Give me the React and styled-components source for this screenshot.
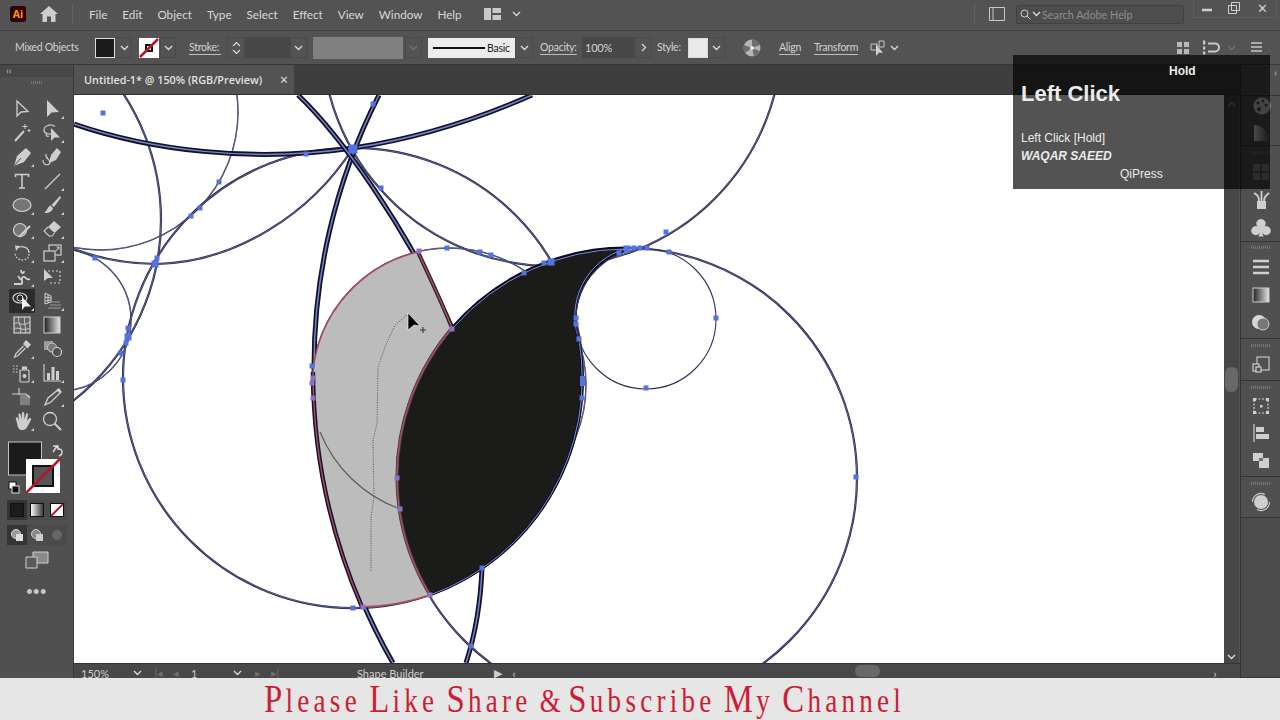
import React from "react";
import styled, { createGlobalStyle } from "styled-components";

const GlobalStyle = createGlobalStyle`
  html, body { margin: 0; padding: 0; background: #535353; overflow: hidden; }
  #root { width: 1280px; height: 720px; }
`;

const Screen = styled.div`
  position: relative; width: 1280px; height: 720px; overflow: hidden;
  display: flex; flex-direction: column;
  font-family: Lato, "Open Sans", sans-serif; color: #d6d6d6; background: #535353;
`;
/* ---------- menu bar ---------- */
const MenuBar = styled.header`
  height: 31px; flex: none; display: flex; align-items: center; padding: 0 0 2px 10px; box-sizing: border-box;
  background: #535353; border-bottom: 1px solid #424242;
`;
const AiLogo = styled.div`
  width: 16px; height: 16px; border-radius: 3px; background: #330000; color: #ff9a00;
  font: 700 10.5px/16px "Open Sans", sans-serif; text-align: center; flex: none;
`;
const HomeBtn = styled.svg`width: 18px; height: 16px; margin-left: 14px; flex: none;`;
const VRule = styled.div`
  width: 1px; height: 20px; background: #636363; margin-left: ${p => p.$ml || 0}px; flex: none;
`;
const MenuList = styled.nav`
  display: flex; gap: 15px; margin-left: 16px; width: 371px; font-size: 11.7px; color: #d8d8d8;
`;
const WorkspaceBtn = styled.div`
  display: flex; align-items: center; gap: 11px; margin-left: 24px;
`;
const Grow = styled.div`flex: 1;`;
const PanelBtn = styled.svg`width: 16px; height: 16px; margin-left: 14px; flex: none;`;
const SearchBox = styled.div`
  width: 168px; height: 19px; margin-left: 11px; display: flex; align-items: center; gap: 1px;
  padding-left: 3px; box-sizing: border-box; background: #4d4d4d; border: 1px solid #404040;
  border-radius: 2px; font-size: 10.8px; color: #8f8f8f;
`;
const WinButtons = styled.div`
  width: 84px; height: 18px; margin: 0 3px 11px 9px; display: flex; align-items: center;
  justify-content: space-around; border: 1px solid #5e5e5e; border-top: 0; box-sizing: border-box;
  font-size: 13px; color: #cfcfcf;
`;
/* ---------- options bar ---------- */
const OptionsBar = styled.div`
  height: 34px; flex: none; display: flex; align-items: center; box-sizing: border-box; padding-left: 15px;
  background: #535353; border-bottom: 1px solid #363636; font-size: 10.5px; letter-spacing: -0.25px; color: #d2d2d2;
`;
const OptLabel = styled.span`
  width: ${p => p.$w}px; flex: none; margin-left: ${p => p.$ml || 0}px; white-space: nowrap;
  border-bottom: ${p => (p.$link ? "1px solid #bdbdbd" : "0")}; line-height: 13px;
`;
const Swatch = styled.div`
  width: 20px; height: 20px; margin-left: ${p => p.$ml || 0}px; box-sizing: border-box; flex: none;
  background: ${p => p.$bg}; border: 1px solid #dcdcdc;
`;
const ChevBox = styled.div`
  width: ${p => p.$w || 17}px; height: 21px; margin-left: ${p => p.$ml || 0}px; flex: none;
  display: flex; align-items: center; justify-content: center; box-sizing: border-box;
  border: 1px solid ${p => (p.$bare ? "transparent" : "#4a4a4a")}; color: #d8d8d8;
`;
const Field = styled.div`
  width: ${p => p.$w}px; height: 21px; margin-left: ${p => p.$ml || 0}px; flex: none;
  background: #474747; display: flex; align-items: center; padding-left: 3px; box-sizing: border-box;
  font-size: 11px; color: #d6d6d6;
`;
const GrayBox = styled.div`
  width: 90px; height: 22px; margin-left: 6px; background: #808080; flex: none;
`;
const ProfileBox = styled.div`
  width: 87px; height: 20px; margin-left: 6px; background: #ececec; flex: none; color: #222;
  display: flex; align-items: center; gap: 2px; padding-left: 5px; box-sizing: border-box; font-size: 10.5px;
`;
const ProfileLine = styled.div`width: 52px; height: 2px; background: #111; flex: none;`;
const IconSlot = styled.svg`
  width: ${p => p.$s || 18}px; height: ${p => p.$s || 18}px; margin-left: ${p => p.$ml || 0}px; flex: none;
`;
const EndPad = styled.div`width: 17px; flex: none;`;
/* ---------- body ---------- */
const Body = styled.div`flex: 1; display: flex; min-height: 0;`;
const Tools = styled.aside`
  width: 74px; flex: none; box-sizing: border-box; background: #505050; border-right: 1px solid #3a3a3a;
  display: flex; flex-direction: column; align-items: center;
`;
const ToolsHead = styled.div`
  align-self: stretch; height: 12px; background: #474747; color: #c4c4c4; font-size: 10px; line-height: 10px;
  padding-left: 6px;
`;
const Grip = styled.div`
  width: ${p => p.$w || 12}px; height: 3px; margin-top: ${p => p.$mt || 0}px; flex: none;
  background: repeating-linear-gradient(90deg, #747474 0 1px, transparent 1px 2px);
`;
const ToolGrid = styled.div`
  display: grid; grid-template-columns: 26px 26px; grid-auto-rows: 24px; column-gap: 4px; margin-top: 13px;
`;
const ToolBtn = styled.div`
  position: relative; display: flex; align-items: center; justify-content: center; color: #cfcfcf;
  background: ${p => (p.$on ? "#2c2c2c" : "transparent")};
  &::after {
    content: ""; position: absolute; right: 1px; bottom: 2px; width: 0; height: 0;
    display: ${p => (p.$more ? "block" : "none")};
    border-left: 3px solid transparent; border-bottom: 3px solid #d0d0d0;
  }
`;
const ToolSvg = styled.svg`width: 20px; height: 20px; display: block;`;
const ColorWidget = styled.svg`width: 60px; height: 53px; margin-top: 8px; display: block; flex: none;`;
const MiniRow = styled.div`
  display: grid; grid-template-columns: repeat(3, 20px); margin-top: ${p => p.$mt}px; height: 20px;
  background: #4b4b4b;
`;
const MiniBtn = styled.div`
  display: flex; align-items: center; justify-content: center;
  background: ${p => (p.$on ? "#343434" : "transparent")};
`;
const MiniSvg = styled.svg`width: 16px; height: 16px; display: block;`;
const ScreenMode = styled.svg`width: 24px; height: 18px; margin-top: 6px; flex: none;`;
const Dots = styled.div`
  margin-top: 18px; color: #c8c8c8; font-size: 11px; line-height: 8px; font-weight: 700; letter-spacing: 0.5px;
`;
const Center = styled.main`flex: 1; display: flex; flex-direction: column; min-width: 0;`;
const TabBar = styled.div`
  height: 30px; flex: none; background: #3e3e3e; display: flex; box-sizing: border-box; border-bottom: 1px solid #2f2f2f;
`;
const Tab = styled.div`
  width: 220px; display: flex; align-items: center; justify-content: space-between; padding: 0 6px 0 10px;
  box-sizing: border-box; background: #535353; font-family: "Open Sans", sans-serif; font-size: 10.8px; font-weight: 600; color: #e2e2e2; white-space: nowrap;
`;
const TabClose = styled.span`font-size: 14px; color: #e8e8e8; font-weight: 400;`;
const Stage = styled.div`flex: 1; display: flex; min-height: 0;`;
const Artboard = styled.svg`width: 1150px; height: 568px; display: block; background: #fff; flex: none;`;
const VScroll = styled.div`
  width: 15px; flex: none; background: #474747; display: flex; flex-direction: column; align-items: center;
  justify-content: space-between; padding: 6px 0 3px; box-sizing: border-box; position: relative;
`;
const Thumb = styled.div`
  position: absolute; top: 272px; left: 1px; width: 13px; height: 25px; border-radius: 6px; background: #686868;
`;
const StatusBar = styled.div`
  height: 15px; flex: none; display: flex; align-items: flex-start; background: #484848; box-sizing: border-box;
  border-top: 1px solid #333; font-size: 11px; color: #cfcfcf; overflow: hidden;
`;
const StatusCell = styled.span`
  width: ${p => p.$w}px; margin-left: ${p => p.$ml || 0}px; flex: none; white-space: nowrap; display: flex;
  align-items: center; justify-content: ${p => p.$c ? "center" : "flex-start"}; height: 18px;
  color: ${p => (p.$dim ? "#6f6f6f" : "inherit")};
`;
const HThumb = styled.div`
  margin-left: ${p => p.$ml}px; width: 25px; height: 12px; background: #686868; border-radius: 6px; flex: none; margin-top: 1px;
`;
const Dock = styled.aside`
  width: 40px; flex: none; background: #505050; border-left: 1px solid #333; box-sizing: border-box;
  display: flex; flex-direction: column;
`;
const DockGroup = styled.div`
  height: ${p => p.$h}px; flex: none; box-sizing: border-box; border-bottom: 1px solid #363636;
  display: flex; flex-direction: column; align-items: center; gap: ${p => p.$gap ?? 8}px;
  padding-top: ${p => p.$pt ?? 3}px; background: ${p => p.$bg || "transparent"}; color: #cfcfcf;
`;
const DockSvg = styled.svg`width: 20px; height: 20px; display: block; flex: none;`;
const DockHead = styled.div`
  align-self: flex-end; padding-right: 3px; font-size: 10px; line-height: 10px; color: #ccc;
`;
/* ---------- banner ---------- */
const Banner = styled.footer`
  height: 42px; flex: none; background: #e6e6e6; padding-left: 264px; box-sizing: border-box;
`;
const BannerText = styled.div`
  display: inline-flex; align-items: baseline; transform: scaleX(.82); transform-origin: 0 0;
  color: #cd1d36; line-height: 42px; white-space: nowrap;
  font-family: "Liberation Serif", serif; font-size: 33px; letter-spacing: 5.2px;
`;
const BannerCap = styled.span`font-size: ${p => p.$s || 40}px; letter-spacing: 4px; line-height: 42px;`;
const BannerWord = styled.span`margin-right: ${p => p.$mr ?? 10}px; line-height: 42px;`;
/* ---------- key overlay ---------- */
const KeyOverlay = styled.div`
  position: absolute; left: 1013px; top: 55px; width: 257px; height: 134px; background: rgba(0,0,0,.675);
  font-family: "Liberation Sans", sans-serif; color: #ebebeb; box-sizing: border-box; padding: 9px 8px 0;
  display: flex; flex-direction: column;
`;
const KeyHold = styled.div`font-size: 12px; font-weight: 700; line-height: 14px; margin-left: 148px;`;
const KeyTitle = styled.div`font-size: 22px; font-weight: 700; line-height: 26px; margin-top: 3px;`;
const KeyLine = styled.div`font-size: 12px; line-height: 18px; margin-top: ${p => p.$mt || 0}px;`;
const KeyName = styled.div`font-size: 12px; line-height: 18px; font-weight: 700; font-style: italic;`;
const KeyApp = styled.div`font-size: 12px; line-height: 18px; margin-left: 99px;`;
/* ---------- artwork ---------- */
const WireOuter = styled.path`
  fill: none; stroke: ${p => (p.$w === "thick" ? "#11112a" : "#2b2b4a")};
  stroke-width: ${p => (p.$w === "thick" ? 5 : p.$w === "hair" ? 1.4 : 2.2)};
`;
const WireInner = styled.path`
  fill: none; stroke: #7583c8; stroke-width: ${p => (p.$w === "thick" ? 1.5 : 0.6)};
`;
const Node = styled.rect`fill: ${p => (p.$mix ? "#8a72c8" : "#5572e0")};`;
const Shape = styled.path`
  fill: ${p => p.$fill || "none"}; stroke: ${p => p.$stroke || "none"}; stroke-width: ${p => p.$sw || 1};
  stroke-dasharray: ${p => p.$dash || "none"};
`;

const circ = (x, y, r) => `M${x - r},${y} A${r},${r} 0 1 1 ${x + r},${y} A${r},${r} 0 1 1 ${x - r},${y} Z`;
const Wire = ({ d, w }) => (<><WireOuter d={d} $w={w} /><WireInner d={d} $w={w} /></>);

const Chevron = ({ dim }) => (
  <svg width="9" height="6" viewBox="0 0 9 6"><path d="M1 1l3.5 3.5L8 1" fill="none" stroke={dim ? "#737373" : "#dcdcdc"} strokeWidth="1.3" /></svg>
);

const blue = [[103,113],[373,104],[306,154],[219,182],[200,208],[191,216],[157,258],[95,258],[128,328],[126,343],[121,353],[123,380],[381,188],[447,248],[480,252],[491,255],[524,273],[544,263],[312,366],[353,608],[482,568],[471,646],[619,253],[634,248],[640,248],[647,248],[669,252],[666,232],[716,318],[646,388],[576,318],[576,324],[579,339],[582,398],[856,477]];
const big = [[353,149,9],[155,264,7],[128,337,7],[551,262,7],[627,249,7]];
const mixed = [[419,251],[452,329],[313,378],[312,383],[313,398],[397,478],[400,509],[363,607],[430,595]];

const DARK = "M452,328 A230,230 0 0 1 627,248 L622,252 A70,70 0 0 0 579,340 A230,230 0 0 1 430,595 A230,230 0 0 1 452,328 Z";
const GRAY = "M418,252 A137,137 0 0 0 313,372 A598,598 0 0 0 362,607 A230,230 0 0 0 430,595 A230,230 0 0 1 397,478 A230,230 0 0 1 452,328 C443,305 431,280 418,252 Z";

const Artwork = () => (
  <Artboard viewBox="74 95 1150 568">
    <Wire d={circ(100,112,138)} w="hair" />
    <Wire d={circ(-69,220,230)} />
    <Wire d={circ(60,320,71)} w="hair" />
    <Wire d="M353,148 C310,215 235,262 157,264 C125,264 98,258 74,249" />
    <Wire d={circ(353,378,230)} />
    <Wire d={circ(552,36,230)} />
    <Wire d={circ(449,385,137)} w="hair" />
    <Wire d={circ(627,478,230)} />
    <Wire d="M74,124 C150,150 250,163 353,148 C420,138 480,118 532,95" w="thick" />
    <Wire d="M379,95 A598,598 0 0 0 393,663" w="thick" />
    <Wire d="M298,95 C340,135 405,225 452,328" w="thick" />
    <Wire d="M482,568 Q480,620 466,663" w="thick" />
    <Shape d={GRAY} $fill="#bcbcbc" />
    <Shape d="M320,432 A137,137 0 0 0 400,509" $stroke="#5c5c5c" $sw="1.2" />
    <Shape d="M313,372 A598,598 0 0 0 362,607" $stroke="#14142a" $sw="4.4" />
    <Shape d="M418,252 C431,280 443,305 452,328" $stroke="#26262e" $sw="4" />
    <Shape d={DARK} $fill="#1b1b19" $stroke="#0c0c1e" $sw="2.8" />
    <Shape d="M430,595 A230,230 0 0 1 397,478 A230,230 0 0 1 452,328" $stroke="#454545" $sw="3.2" />
    <Shape d="M454,327 A230,230 0 0 1 625,249 A70,70 0 0 0 579,340 A230,230 0 0 1 430,595" $stroke="#7c8be6" $sw="1" />
    <Shape d={circ(646,319,70)} $stroke="#33335a" $sw="1.1" />
    <Shape d={GRAY} $stroke="#ad4a62" $sw="1.4" />
    <Shape d="M407,315 L395,325 L385,347 L378,367 L377,423 L373,440 L374,497 L371,517 L371,572" $stroke="#454545" $sw=".9" $dash="1 1.4" />
    {blue.map(([x,y],i) => <Node key={i} x={x-2.5} y={y-2.5} width="5" height="5" />)}
    {big.map(([x,y,s],i) => <Node key={i} x={x-s/2} y={y-s/2} width={s} height={s} />)}
    <Node x="580" y="376" width="5" height="10" />
    {mixed.map(([x,y],i) => <Node $mix key={i} x={x-2.5} y={y-2.5} width="5" height="5" />)}
    <Shape d="M408,313 L408,330 L414,325 L420,326 Z" $fill="#000" $stroke="#fff" $sw=".6" />
    <Shape d="M423,327 V333 M420,330 H426" $stroke="#222" $sw=".9" />
  </Artboard>
);

const S = ({ d, w = 1.3, f = "none", c = "#cfcfcf", dash }) => (
  <path d={d} fill={f} stroke={c} strokeWidth={w} strokeDasharray={dash} />
);
const F = ({ d, c = "#cfcfcf" }) => <path d={d} fill={c} />;

const tools = [
  { n: <S d="M5 2 L5 17 L9 13 L16 12.5 Z" /> },
  { n: <F d="M5 1 L5 18 L9.5 13.5 L17 13 Z" />, m: 1 },
  { n: <><S d="M3 18 L12 8" w="2" /><S d="M13 1v5 M10.500 3.500h5 M17 6v3 M15.500 7.500h3" w="1" /></> },
  { n: <><S d="M13 3.500 C8 0 2 3 2 7 C2 11 8 12 11 10 M5 10 C3 12 5 14 7 13" w="1.200" /><F d="M9 5 L9 18 L12.500 14.500 L18 14.500 Z" /></>, m: 1 },
  { n: <><F d="M14 1 L19 6 L12 15 L2 19 L5 9 Z" /><S d="M2.500 18.500 L9 11" c="#505050" w="1" /></>, m: 1 },
  { n: <><F d="M15 1 L19 5 L14 13 L7 16 L9 8 Z" /><S d="M1 13 C1 19 8 19 8 15 C8 12 3 12 4 7" w="1.100" /></> },
  { n: <S d="M3.500 6 V3.500 H16.500 V6 M10 3.500 V17 M7 17 H13" w="1.500" /> },
  { n: <S d="M3 18 L18 3" w="1.200" />, m: 1 },
  { n: <ellipse cx="10" cy="10" rx="9" ry="6.500" fill="#757575" stroke="#cfcfcf" strokeWidth="1.200" />, m: 1 },
  { n: <><F d="M18 1 L19 2.500 L12 12 L9.500 10 Z" /><F d="M8.500 10.500 L11 13 C10 17 6 18.500 2 18 C5 17 5 12 8.500 10.500 Z" /></>, m: 1 },
  { n: <><circle cx="8" cy="11" r="6.500" fill="#757575" stroke="#cfcfcf" strokeWidth="1.200" /><S d="M7 18 L18 7" w="2.200" /></>, m: 1 },
  { n: <><F d="M12 2 L19 8 L12.500 14 L6 8 Z" /><S d="M6 8 L2 12 L7 17 L10 17 L12.500 14" w="1.100" /></>, m: 1 },
  { n: <><S d="M5 5 C9 2 17 4 17 10" w="1.300" /><F d="M3 2.500 L8 3 L4 8 Z" /><S d="M17 11 C17 19 5 19 3 11" dash="1.500 1.600" /></>, m: 1 },
  { n: <><rect x="7" y="2" width="12" height="10" fill="none" stroke="#cfcfcf" strokeWidth="1.200" /><rect x="2" y="8" width="11" height="10" fill="#505050" stroke="#cfcfcf" strokeWidth="1.200" /><S d="M14 8 L17 4 M14.500 4 H17 V6.500" w="1" /></>, m: 1 },
  { n: <><S d="M2 17 H9 C12 17 8 11 11 10 C14 9 14 14 18 12 M6 9 L9 13 M9 3 C9 7 12 7 12 4" w="1.800" /></>, m: 1 },
  { n: <><S d="M6 4 H18 V16 H6" dash="2 2" w="1.200" /><F d="M2 2 L2 14 L6 11 L11 11 Z" /></> },
  { n: <><ellipse cx="8" cy="7" rx="7" ry="5" fill="none" stroke="#dedede" strokeWidth="1.100" /><circle cx="8" cy="7" r="3" fill="none" stroke="#dedede" strokeWidth="1" /><F d="M10 6 L10 19 L13 15.500 L19 15.500 Z" c="#efefef" /></>, m: 1, on: 1 },
  { n: <><S d="M3 2 V13 L9 11 V5 Z M3 6 L9 7 M3 10 L9 9 M6 3 V12" w="1" /><S d="M9 11 H18 M8 14 H19 M6 17 H19" w="1" c="#9a9a9a" /></>, m: 1 },
  { n: <><rect x="2" y="2" width="16" height="16" fill="#636363" stroke="#cfcfcf" strokeWidth="1.200" /><S d="M2 9 C7 5 8 13 18 7 M2 14 C6 11 11 17 18 13 M7 2 C5 8 11 12 8 18 M13 2 C11 8 15 12 13 18" w=".9" /></> },
  { n: <><defs><linearGradient id="tg"><stop offset="0" stopColor="#1f1f1f" /><stop offset="1" stopColor="#e4e4e4" /></linearGradient></defs><rect x="2" y="2" width="16" height="16" fill="url(#tg)" stroke="#cfcfcf" strokeWidth="1" /></> },
  { n: <><F d="M14 1 L19 5.500 L15.500 9.500 L11 5 Z" /><S d="M11.500 7 L4 14.500 L2.500 18 L6 16.500 L13.500 9" w="1.200" /></>, m: 1 },
  { n: <><rect x="2" y="2" width="9" height="9" fill="#999" /><circle cx="10" cy="8.500" r="4.500" fill="#777" stroke="#cfcfcf" strokeWidth="1" /><circle cx="15" cy="13" r="4.500" fill="#505050" stroke="#cfcfcf" strokeWidth="1.200" /></> },
  { n: <><rect x="8" y="7" width="9" height="12" rx="1" fill="none" stroke="#cfcfcf" strokeWidth="1.200" /><circle cx="12.500" cy="13" r="2" fill="#cfcfcf" /><rect x="10" y="3.500" width="5" height="3" fill="#cfcfcf" /><S d="M1 3h1.500 M4 3h1.500 M1 6h1.500 M4 6h1.500 M1 9h1.500 M4 9h1.500" w="1.200" /></>, m: 1 },
  { n: <><S d="M2 1 V18 H19" w="1.100" /><F d="M5 10h3v7H5z M9.500 4h3v13h-3z M14 8h3v9h-3z" /></>, m: 1 },
  { n: <><rect x="8" y="8" width="10" height="10" fill="#808080" /><S d="M7 1 V8 M0 7 H8 M8 7 H14 L18 11" w="1.100" /></> },
  { n: <><S d="M17 2 L19 5 L9 15 L3 18 L6 11 Z" w="1.300" /><F d="M14 3 L18 6.500 L19 5 L17 1.500 Z" /></>, m: 1 },
  { n: <F d="M4 8 C3 6 5 5.500 6 7 L7 10 L6.500 3.500 C6.500 2 8.500 2 8.700 3.500 L9.500 8.500 L10 2 C10 .5 12 .5 12.200 2 L12.500 8.500 L14 3 C14.500 1.800 16 2.200 16 3.500 L15 10 L17 7.500 C18 6.500 19.500 7.500 19 9 L15.500 15.500 C14 18.500 12 19 10 19 C7 19 6 16.500 5.500 14.500 Z" />, m: 1 },
  { n: <><circle cx="8" cy="8" r="6.500" fill="none" stroke="#cfcfcf" strokeWidth="1.300" /><S d="M12.500 12.500 L19 19" w="2" /></> },
];

const Mini = ({ children }) => <MiniSvg viewBox="0 0 16 16">{children}</MiniSvg>;

const dockA = [
  <><circle cx="11" cy="10" r="8.500" fill="#cfcfcf" /><circle cx="7" cy="7" r="1.500" fill="#505050" /><circle cx="12" cy="5" r="1.500" fill="#505050" /><circle cx="15" cy="9" r="1.500" fill="#505050" /><circle cx="8" cy="13" r="2" fill="#505050" /></>,
  <><defs><linearGradient id="dg"><stop offset="0" stopColor="#ddd" /><stop offset="1" stopColor="#555" /></linearGradient></defs><path d="M3 18 V2 C12 2 18 10 18 18 Z" fill="url(#dg)" /></>,
];
const dockB = [
  <><rect x="2" y="2" width="16" height="16" fill="#888" /><path d="M2 10 H18 M10 2 V18" stroke="#4b4b4b" strokeWidth="1.500" /></>,
  <><path d="M6 11 H15 V19 H6 Z" fill="#cfcfcf" /><path d="M8 11 C8 6 6 5 3 3 M10.500 11 V1 M13 11 C13 6 15 6 18 3" fill="none" stroke="#cfcfcf" strokeWidth="1.800" /></>,
  <path d="M10 1 A4.500 4.500 0 0 1 13.500 8.500 A4.500 4.500 0 1 1 11 14 L12.500 18.500 H7.500 L9 14 A4.500 4.500 0 1 1 6.500 8.500 A4.500 4.500 0 0 1 10 1 Z" fill="#cfcfcf" />,
];
const dockC = [
  <path d="M2 4 H18 M2 10 H18 M2 16 H18" stroke="#cfcfcf" strokeWidth="2.400" />,
  <><defs><linearGradient id="dg2"><stop offset="0" stopColor="#222" /><stop offset="1" stopColor="#e5e5e5" /></linearGradient></defs><rect x="2" y="3" width="16" height="14" fill="url(#dg2)" stroke="#ccc" strokeWidth="1" /></>,
  <><circle cx="8" cy="9" r="7" fill="#d8d8d8" /><circle cx="12" cy="11" r="6" fill="#777" stroke="#cfcfcf" strokeWidth="1" /></>,
];
const dockD = [<><rect x="6" y="3" width="12" height="13" fill="none" stroke="#cfcfcf" strokeWidth="1.100" /><rect x="2" y="10" width="6" height="7" fill="#505050" stroke="#cfcfcf" strokeWidth="1.200" /><rect x="5" y="13" width="5" height="5" fill="#505050" stroke="#cfcfcf" strokeWidth="1.200" /></>];
const dockE = [
  <><path d="M4 3 H16 M4 17 H16 M3 4 V16 M17 4 V16" stroke="#cfcfcf" strokeWidth="1.200" strokeDasharray="2 1.500" fill="none" /><rect x="2" y="2" width="3" height="3" fill="#cfcfcf" /><rect x="15" y="2" width="3" height="3" fill="#cfcfcf" /><rect x="2" y="15" width="3" height="3" fill="#cfcfcf" /><rect x="15" y="15" width="3" height="3" fill="#cfcfcf" /><rect x="9" y="9" width="2.500" height="2.500" fill="#cfcfcf" /></>,
  <><path d="M3 1 V19" stroke="#cfcfcf" strokeWidth="1.200" /><rect x="5" y="4" width="8" height="5" fill="#cfcfcf" /><rect x="5" y="11" width="13" height="5" fill="#cfcfcf" /></>,
  <><rect x="2" y="3" width="10" height="8" fill="#cfcfcf" /><rect x="8" y="8" width="10" height="10" fill="#cfcfcf" /><rect x="8" y="8" width="4" height="3" fill="#707070" /></>,
];
const dockF = [<><circle cx="10" cy="10" r="7" fill="#cfcfcf" /><path d="M1.500 10 A8.500 8.500 0 0 1 14 2.500 M18.500 10 A8.500 8.500 0 0 1 6 17.500" fill="none" stroke="#cfcfcf" strokeWidth="1.100" /></>];

const DockIcons = ({ list }) => list.map((n, i) => <DockSvg key={i} viewBox="0 0 20 20">{n}</DockSvg>);

export default function App() {
  return (
    <Screen>
      <GlobalStyle />
      <MenuBar>
        <AiLogo>Ai</AiLogo>
        <HomeBtn viewBox="0 0 18 16"><path d="M9 0 L18 8 H15.500 V16 H11 V10.500 H7 V16 H2.500 V8 H0 Z" fill="#cdcdcd" /></HomeBtn>
        <VRule $ml={14} />
        <MenuList>
          {["File","Edit","Object","Type","Select","Effect","View","Window","Help"].map(m => <span key={m}>{m}</span>)}
        </MenuList>
        <WorkspaceBtn>
          <svg width="17" height="12" viewBox="0 0 17 12"><path d="M0 0h7v12H0z M8.500 0H17v5H8.500z M8.500 7H17v5H8.500z" fill="#c8c8c8" /></svg>
          <Chevron />
        </WorkspaceBtn>
        <Grow />
        <VRule />
        <PanelBtn viewBox="0 0 16 16"><path d="M.5 1.500h15v13H.5z M4 1.500v13" fill="none" stroke="#c8c8c8" /></PanelBtn>
        <SearchBox>
          <svg width="11" height="11" viewBox="0 0 11 11"><circle cx="4.500" cy="4.500" r="3.500" fill="none" stroke="#d0d0d0" /><path d="M7 7l3.500 3.500" stroke="#d0d0d0" /></svg>
          <Chevron />
          <span>Search Adobe Help</span>
        </SearchBox>
        <WinButtons>
          <svg width="10" height="10" viewBox="0 0 10 10"><path d="M0 7h10" stroke="#cfcfcf" strokeWidth="2.500" /></svg>
          <svg width="12" height="12" viewBox="0 0 12 12"><path d="M3.500.5h8v8h-8z M.5 3.500h8v8h-8z" fill="none" stroke="#cfcfcf" /></svg>
          <span>✕</span>
        </WinButtons>
      </MenuBar>

      <OptionsBar>
        <OptLabel $w={62}>Mixed Objects</OptLabel>
        <Swatch $ml={18} $bg="#1c1c1c" />
        <ChevBox $ml={1} $w={16}><Chevron /></ChevBox>
        <IconSlot $ml={7} $s={20} viewBox="0 0 20 20"><rect width="20" height="20" fill="#fff" /><rect x="6" y="6" width="8" height="8" fill="#111" /><rect x="8" y="8" width="4" height="4" fill="#fff" /><path d="M1 19L19 1" stroke="#b1182f" strokeWidth="2.500" /></IconSlot>
        <ChevBox $ml={1} $w={16}><Chevron /></ChevBox>
        <OptLabel $ml={13} $w={32} $link>Stroke:</OptLabel>
        <ChevBox $ml={6} $w={18}>
          <svg width="9" height="14" viewBox="0 0 9 14"><path d="M1 5l3.500-3.500L8 5 M1 9l3.500 3.500L8 9" fill="none" stroke="#dcdcdc" strokeWidth="1.200" /></svg>
        </ChevBox>
        <Field $w={45} />
        <ChevBox $w={17}><Chevron /></ChevBox>
        <GrayBox />
        <ChevBox $ml={2} $w={17}><Chevron dim /></ChevBox>
        <ProfileBox><ProfileLine /><span>Basic</span></ProfileBox>
        <ChevBox $w={18}><Chevron /></ChevBox>
        <OptLabel $ml={7} $w={37} $link>Opacity:</OptLabel>
        <Field $ml={5} $w={52}>100%</Field>
        <ChevBox $ml={1} $w={17}>
          <svg width="6" height="9" viewBox="0 0 6 9"><path d="M1 1l3.500 3.500L1 8" fill="none" stroke="#dcdcdc" strokeWidth="1.200" /></svg>
        </ChevBox>
        <OptLabel $ml={5} $w={25}>Style:</OptLabel>
        <Swatch $ml={6} $bg="#e9e9e9" />
        <ChevBox $w={17}><Chevron /></ChevBox>
        <IconSlot $ml={18} $s={18} viewBox="0 0 18 18">
          <circle cx="9" cy="9" r="8.500" fill="#b5b5b5" /><path d="M9 9L9 .5A8.500 8.500 0 0 1 17 6Z M9 9L17 12A8.500 8.500 0 0 1 11 17.500Z M9 9L2 14A8.500 8.500 0 0 1 1 6Z" fill="#6e6e6e" /><circle cx="9" cy="9" r="2" fill="#e4e4e4" />
        </IconSlot>
        <OptLabel $ml={18} $w={21} $link>Align</OptLabel>
        <OptLabel $ml={14} $w={44} $link>Transform</OptLabel>
        <IconSlot $ml={12} $s={16} viewBox="0 0 16 16">
          <path d="M1 4h6v6H1z M9 1h5v6H9z" fill="none" stroke="#c8c8c8" /><path d="M6 4 L6 16 L9 12.500 L13 13 Z" fill="#d0d0d0" />
        </IconSlot>
        <ChevBox $ml={2} $w={12} $bare><Chevron /></ChevBox>
        <Grow />
        <IconSlot $s={14} viewBox="0 0 14 14"><path d="M1 1h5v5H1z M8 1h5v5H8z M1 8h5v5H1z M8 8h5v5H8z" fill="#b8b8b8" /></IconSlot>
        <IconSlot $ml={13} $s={19} viewBox="0 0 19 14"><path d="M1 0v4 M1 6v3 M1 11v3" stroke="#c8c8c8" strokeWidth="2.500" /><path d="M5 3h7a4 4 0 0 1 0 8H5" fill="none" stroke="#c8c8c8" strokeWidth="2" /></IconSlot>
        <ChevBox $ml={3} $w={12} $bare><Chevron dim /></ChevBox>
        <IconSlot $ml={13} $s={13} viewBox="0 0 13 13"><path d="M1 2h11 M1 6h11 M1 10h11" stroke="#c8c8c8" strokeWidth="1.500" /></IconSlot>
        <EndPad />
      </OptionsBar>

      <Body>
        <Tools>
          <ToolsHead>‹‹</ToolsHead>
          <Grip $mt={4} />
          <ToolGrid>
            {tools.map((t, i) => (
              <ToolBtn key={i} $more={t.m} $on={t.on}>
                <ToolSvg viewBox="0 0 20 20">{t.n}</ToolSvg>
              </ToolBtn>
            ))}
          </ToolGrid>
          <ColorWidget viewBox="0 0 60 53">
            <rect x="1.500" y="1" width="33" height="33" fill="#1c1c1c" stroke="#c4c4c4" />
            <path d="M46 11 L50 5 L52 8 C55 8 56 11 54 14 L52 15 M46 5h5v4" fill="none" stroke="#d8d8d8" strokeWidth="1.500" />
            <rect x="19" y="18" width="34" height="34" fill="#fff" />
            <rect x="26" y="25" width="20" height="20" fill="#555" stroke="#111" strokeWidth="2" />
            <path d="M19 52 L53 18" stroke="#b1182f" strokeWidth="2.500" />
            <rect x="2" y="41" width="7" height="7" fill="#fff" stroke="#111" />
            <rect x="5" y="45" width="7" height="7" fill="#111" stroke="#ddd" />
          </ColorWidget>
          <MiniRow $mt={6}>
            <MiniBtn $on><Mini><rect x="1.500" y="1.500" width="13" height="13" fill="#1c1c1c" stroke="#111" /></Mini></MiniBtn>
            <MiniBtn><Mini><defs><linearGradient id="mg"><stop offset="0" stopColor="#fff" /><stop offset="1" stopColor="#333" /></linearGradient></defs><rect x="1.500" y="1.500" width="13" height="13" fill="url(#mg)" stroke="#111" /></Mini></MiniBtn>
            <MiniBtn><Mini><rect x="1.500" y="1.500" width="13" height="13" fill="#fff" stroke="#111" /><path d="M2 14L14 2" stroke="#b1182f" strokeWidth="2" /></Mini></MiniBtn>
          </MiniRow>
          <MiniRow $mt={5}>
            <MiniBtn $on><Mini><circle cx="7" cy="7" r="4.500" fill="#999" stroke="#ddd" /><rect x="7" y="7" width="7" height="7" fill="#ddd" /></Mini></MiniBtn>
            <MiniBtn><Mini><circle cx="7" cy="7" r="4.500" fill="#888" stroke="#ccc" /><rect x="7" y="7" width="7" height="7" fill="#ccc" /></Mini></MiniBtn>
            <MiniBtn><Mini><circle cx="8" cy="8" r="4.500" fill="#666" stroke="#6c6c6c" /></Mini></MiniBtn>
          </MiniRow>
          <ScreenMode viewBox="0 0 24 18"><path d="M8 1h15v11H8z" fill="#8a8a8a" stroke="#cfcfcf" /><path d="M1 6h11v11H1z" fill="#5a5a5a" stroke="#cfcfcf" /></ScreenMode>
          <Dots>•••</Dots>
        </Tools>
        <Center>
          <TabBar>
            <Tab>Untitled-1* @ 150% (RGB/Preview)<TabClose>×</TabClose></Tab>
          </TabBar>
          <Stage>
            <Artwork />
            <VScroll>
              <svg width="9" height="6" viewBox="0 0 9 6"><path d="M1 5l3.500-3.500L8 5" fill="none" stroke="#9a9a9a" strokeWidth="1.200" /></svg>
              <Thumb />
              <Chevron />
            </VScroll>
          </Stage>
          <StatusBar>
            <StatusCell $ml={7} $w={30}>150%</StatusCell>
            <StatusCell $ml={21} $w={10} $c><Chevron /></StatusCell>
            <StatusCell $ml={10} $w={14} $c $dim>|◂</StatusCell>
            <StatusCell $ml={6} $w={8} $c $dim>◂</StatusCell>
            <StatusCell $ml={11} $w={6}>1</StatusCell>
            <StatusCell $ml={35} $w={10} $c><Chevron /></StatusCell>
            <StatusCell $ml={12} $w={8} $c $dim>▸</StatusCell>
            <StatusCell $ml={7} $w={12} $c $dim>▸|</StatusCell>
            <StatusCell $ml={76} $w={61}>Shape Builder</StatusCell>
            <StatusCell $ml={75} $w={10} $c>▶</StatusCell>
            <StatusCell $ml={8} $w={6} $c>‹</StatusCell>
            <HThumb $ml={338} />
            <StatusCell $ml={332} $w={6} $c>›</StatusCell>
          </StatusBar>
        </Center>
        <Dock>
          <DockGroup $h={31} $pt={2}><DockHead>‹</DockHead></DockGroup>
          <DockGroup $h={50} $pt={0} $gap={7}><DockIcons list={dockA} /></DockGroup>
          <DockGroup $h={96} $pt={5}><Grip $w={20} /><DockIcons list={dockB} /></DockGroup>
          <DockGroup $h={97} $pt={4}><Grip $w={20} /><DockIcons list={dockC} /></DockGroup>
          <DockGroup $h={42} $pt={5} $gap={7}><Grip $w={20} /><DockIcons list={dockD} /></DockGroup>
          <DockGroup $h={96} $pt={5} $gap={7}><Grip $w={20} /><DockIcons list={dockE} /></DockGroup>
          <DockGroup $h={41} $pt={5} $gap={7}><Grip $w={20} /><DockIcons list={dockF} /></DockGroup>
          <DockGroup $h={160} $bg="#4c4c4c" />
        </Dock>
      </Body>

      <Banner>
        <BannerText>
          <BannerWord><BannerCap>P</BannerCap>lease</BannerWord>
          <BannerWord><BannerCap>L</BannerCap>ike</BannerWord>
          <BannerWord><BannerCap>S</BannerCap>hare</BannerWord>
          <BannerWord $mr={5}><BannerCap $s={33}>&amp;</BannerCap></BannerWord>
          <BannerWord><BannerCap>S</BannerCap>ubscribe</BannerWord>
          <BannerWord><BannerCap>M</BannerCap>y</BannerWord>
          <BannerWord $mr={0}><BannerCap>C</BannerCap>hannel</BannerWord>
        </BannerText>
      </Banner>

      <KeyOverlay>
        <KeyHold>Hold</KeyHold>
        <KeyTitle>Left Click</KeyTitle>
        <KeyLine $mt={22}>Left Click [Hold]</KeyLine>
        <KeyName>WAQAR SAEED</KeyName>
        <KeyApp>QiPress</KeyApp>
      </KeyOverlay>
    </Screen>
  );
}
